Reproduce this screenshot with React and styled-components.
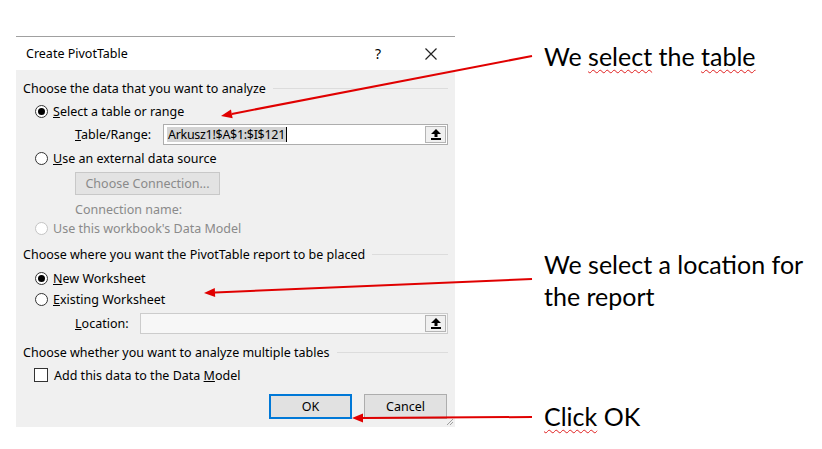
import React from 'react';
import styled, { createGlobalStyle } from 'styled-components';

const GlobalStyle = createGlobalStyle`
  html, body { margin: 0; padding: 0; background: #fff; }
  body { font-family: "Noto Sans", "DejaVu Sans", sans-serif; }
`;

const Page = styled.div`
  position: relative;
  width: 822px;
  height: 449px;
  display: flex;
  align-items: flex-start;
  overflow: hidden;
  background: #fff;
`;

const Dialog = styled.div`
  margin: 36px 0 0 16px;
  width: 439px;
  display: flex;
  flex-direction: column;
  border-top: 1px solid #a0a0a0;
  font-family: "Noto Sans", "DejaVu Sans", sans-serif;
  font-size: 12.5px;
  color: #000;
`;

const TitleBar = styled.div`
  height: 33px;
  background: #fff;
  display: flex;
  align-items: center;
  padding: 0 4px 0 10px;
`;

const Title = styled.div`
  flex: 1;
`;

const TitleBtn = styled.div`
  width: 40px;
  height: 30px;
  display: flex;
  align-items: center;
  justify-content: center;
  margin-left: ${p => p.$gap || 0}px;
  font-size: 14px;
`;

const Body = styled.div`
  position: relative;
  background: #f0f0f0;
  height: 357px;
  box-sizing: border-box;
  padding: 10px 7px 0 7px;
  display: flex;
  flex-direction: column;
`;

const Header = styled.div`
  display: flex;
  align-items: center;
  gap: 7px;
  height: 16px;
  margin-top: ${p => p.$mt || 0}px;
  white-space: nowrap;
  &::after {
    content: "";
    flex: 1;
    height: 1px;
    background: #dcdcdc;
  }
`;

const Row = styled.div`
  display: flex;
  align-items: center;
  height: ${p => p.$h || 16}px;
  margin-top: ${p => p.$mt || 0}px;
  padding-left: ${p => p.$pl || 0}px;
  color: ${p => (p.$disabled ? '#8a8a8a' : '#000')};
  white-space: nowrap;
`;

const Radio = styled.span`
  width: 13px;
  height: 13px;
  box-sizing: border-box;
  border-radius: 50%;
  border: 1px solid ${p => (p.$disabled ? '#c4c4c4' : '#333')};
  background: #fff;
  display: inline-flex;
  align-items: center;
  justify-content: center;
  margin-right: 5px;
  &::after {
    content: "";
    width: 7px;
    height: 7px;
    border-radius: 50%;
    background: #000;
    display: ${p => (p.$checked ? 'block' : 'none')};
  }
`;

const Check = styled.span`
  width: 14px;
  height: 14px;
  box-sizing: border-box;
  border: 1px solid #333;
  background: #fff;
  margin-right: 6px;
`;

const Label = styled.span`
  width: ${p => p.$w}px;
  flex: none;
`;

const Field = styled.div`
  flex: 1;
  height: 21px;
  box-sizing: border-box;
  border: 1px solid ${p => (p.$disabled ? '#cccccc' : '#adadad')};
  background: ${p => (p.$disabled ? '#f7f7f7' : '#fff')};
  display: flex;
  align-items: center;
  padding: 0 1px 0 3px;
`;

const Selected = styled.span`
  background: #d3d3d3;
  line-height: 15px;
  padding: 0 1px;
  letter-spacing: -0.3px;
`;

const Caret = styled.span`
  width: 1px;
  height: 15px;
  background: #000;
`;

const Spacer = styled.span`
  flex: 1;
`;

const PickBtn = styled.span`
  width: 21px;
  height: 17px;
  box-sizing: border-box;
  border: 1px solid #b4b4b4;
  background: #f0f0f0;
  display: flex;
  align-items: center;
  justify-content: center;
`;

const ConnBtn = styled.div`
  width: 145px;
  height: 23px;
  box-sizing: border-box;
  border: 1px solid #c8c8c8;
  background: #e3e3e3;
  color: #8a8a8a;
  display: flex;
  align-items: center;
  justify-content: center;
`;

const Buttons = styled.div`
  display: flex;
  justify-content: flex-end;
  gap: 12px;
  margin-top: 11px;
  padding-right: 1px;
`;

const Btn = styled.div`
  width: 83px;
  height: 25px;
  box-sizing: border-box;
  background: #e1e1e1;
  border: ${p => (p.$primary ? '2px solid #0078d7' : '1px solid #adadad')};
  display: flex;
  align-items: center;
  justify-content: center;
`;

const Grip = styled.svg`
  position: absolute;
  right: 1px;
  bottom: 1px;
`;

const Notes = styled.div`
  margin-left: 89px;
  display: flex;
  flex-direction: column;
  font-family: Lato, "Open Sans", sans-serif;
  font-size: 25px;
  line-height: 32px;
  color: #000;
`;

const Note = styled.div`
  margin-top: ${p => p.$mt}px;
`;

const Squiggle = styled.span`
  text-decoration: underline wavy #e02020 1px;
  text-underline-offset: 3px;
`;

const Arrows = styled.svg`
  position: absolute;
  left: 0;
  top: 0;
  pointer-events: none;
`;

const PickIcon = () => (
  <svg width="10" height="11" viewBox="0 0 10 11">
    <path d="M5 0 L10 5 L6.5 5 L6.5 8 L3.5 8 L3.5 5 L0 5 Z" fill="#000" />
    <rect x="0" y="9" width="10" height="2" fill="#000" />
  </svg>
);

const Arrow = ({ x1, y1, x2, y2 }) => {
  const ang = Math.atan2(y2 - y1, x2 - x1);
  const len = 11;
  const w = 4.5;
  const bx = x2 - len * Math.cos(ang);
  const by = y2 - len * Math.sin(ang);
  const px = -Math.sin(ang) * w;
  const py = Math.cos(ang) * w;
  return (
    <g>
      <line x1={x1} y1={y1} x2={bx} y2={by} stroke="#e00000" strokeWidth="2" />
      <polygon points={`${x2},${y2} ${bx + px},${by + py} ${bx - px},${by - py}`} fill="#e00000" />
    </g>
  );
};

export default function App() {
  return (
    <Page>
      <GlobalStyle />
      <Dialog>
        <TitleBar>
          <Title>Create PivotTable</Title>
          <TitleBtn>?</TitleBtn>
          <TitleBtn $gap={13}>
            <svg width="12" height="12" viewBox="0 0 12 12">
              <path d="M0.5 0.5 L11.5 11.5 M11.5 0.5 L0.5 11.5" stroke="#222" strokeWidth="1.2" />
            </svg>
          </TitleBtn>
        </TitleBar>
        <Body>
          <Header>Choose the data that you want to analyze</Header>
          <Row $mt={7} $pl={12}>
            <Radio $checked />
            <span><u>S</u>elect a table or range</span>
          </Row>
          <Row $mt={5} $h={21} $pl={52}>
            <Label $w={88}><u>T</u>able/Range:</Label>
            <Field>
              <Selected>Arkusz1!$A$1:$I$121</Selected>
              <Caret />
              <Spacer />
              <PickBtn><PickIcon /></PickBtn>
            </Field>
          </Row>
          <Row $mt={5} $pl={12}>
            <Radio />
            <span><u>U</u>se an external data source</span>
          </Row>
          <Row $mt={6} $h={23} $pl={52}>
            <ConnBtn>Choose Connection...</ConnBtn>
          </Row>
          <Row $mt={6} $pl={52} $disabled>Connection name:</Row>
          <Row $mt={3} $pl={12} $disabled>
            <Radio $disabled />
            <span>Use this workbook's Data Model</span>
          </Row>
          <Header $mt={10}>Choose where you want the PivotTable report to be placed</Header>
          <Row $mt={8} $pl={12}>
            <Radio $checked />
            <span><u>N</u>ew Worksheet</span>
          </Row>
          <Row $mt={5} $pl={12}>
            <Radio />
            <span><u>E</u>xisting Worksheet</span>
          </Row>
          <Row $mt={6} $h={21} $pl={52}>
            <Label $w={65}><u>L</u>ocation:</Label>
            <Field $disabled>
              <Spacer />
              <PickBtn><PickIcon /></PickBtn>
            </Field>
          </Row>
          <Header $mt={10}>Choose whether you want to analyze multiple tables</Header>
          <Row $mt={7} $pl={11}>
            <Check />
            <span>Add this data to the Data <u>M</u>odel</span>
          </Row>
          <Buttons>
            <Btn $primary>OK</Btn>
            <Btn>Cancel</Btn>
          </Buttons>
          <Grip width="8" height="8" viewBox="0 0 8 8">
            <path d="M7 1 L1 7 M7 4 L4 7" stroke="#a0a0a0" strokeWidth="1" />
          </Grip>
        </Body>
      </Dialog>
      <Notes>
        <Note $mt={40}>We <Squiggle>select</Squiggle> the <Squiggle>table</Squiggle></Note>
        <Note $mt={176}>We select a location for<br />the report</Note>
        <Note $mt={88}><Squiggle>Click</Squiggle> OK</Note>
      </Notes>
      <Arrows width="822" height="449" viewBox="0 0 822 449">
        <Arrow x1={532} y1={56} x2={221} y2={116} />
        <Arrow x1={532} y1={279} x2={204} y2={293} />
        <Arrow x1={532} y1={417} x2={352} y2={418} />
      </Arrows>
    </Page>
  );
}
